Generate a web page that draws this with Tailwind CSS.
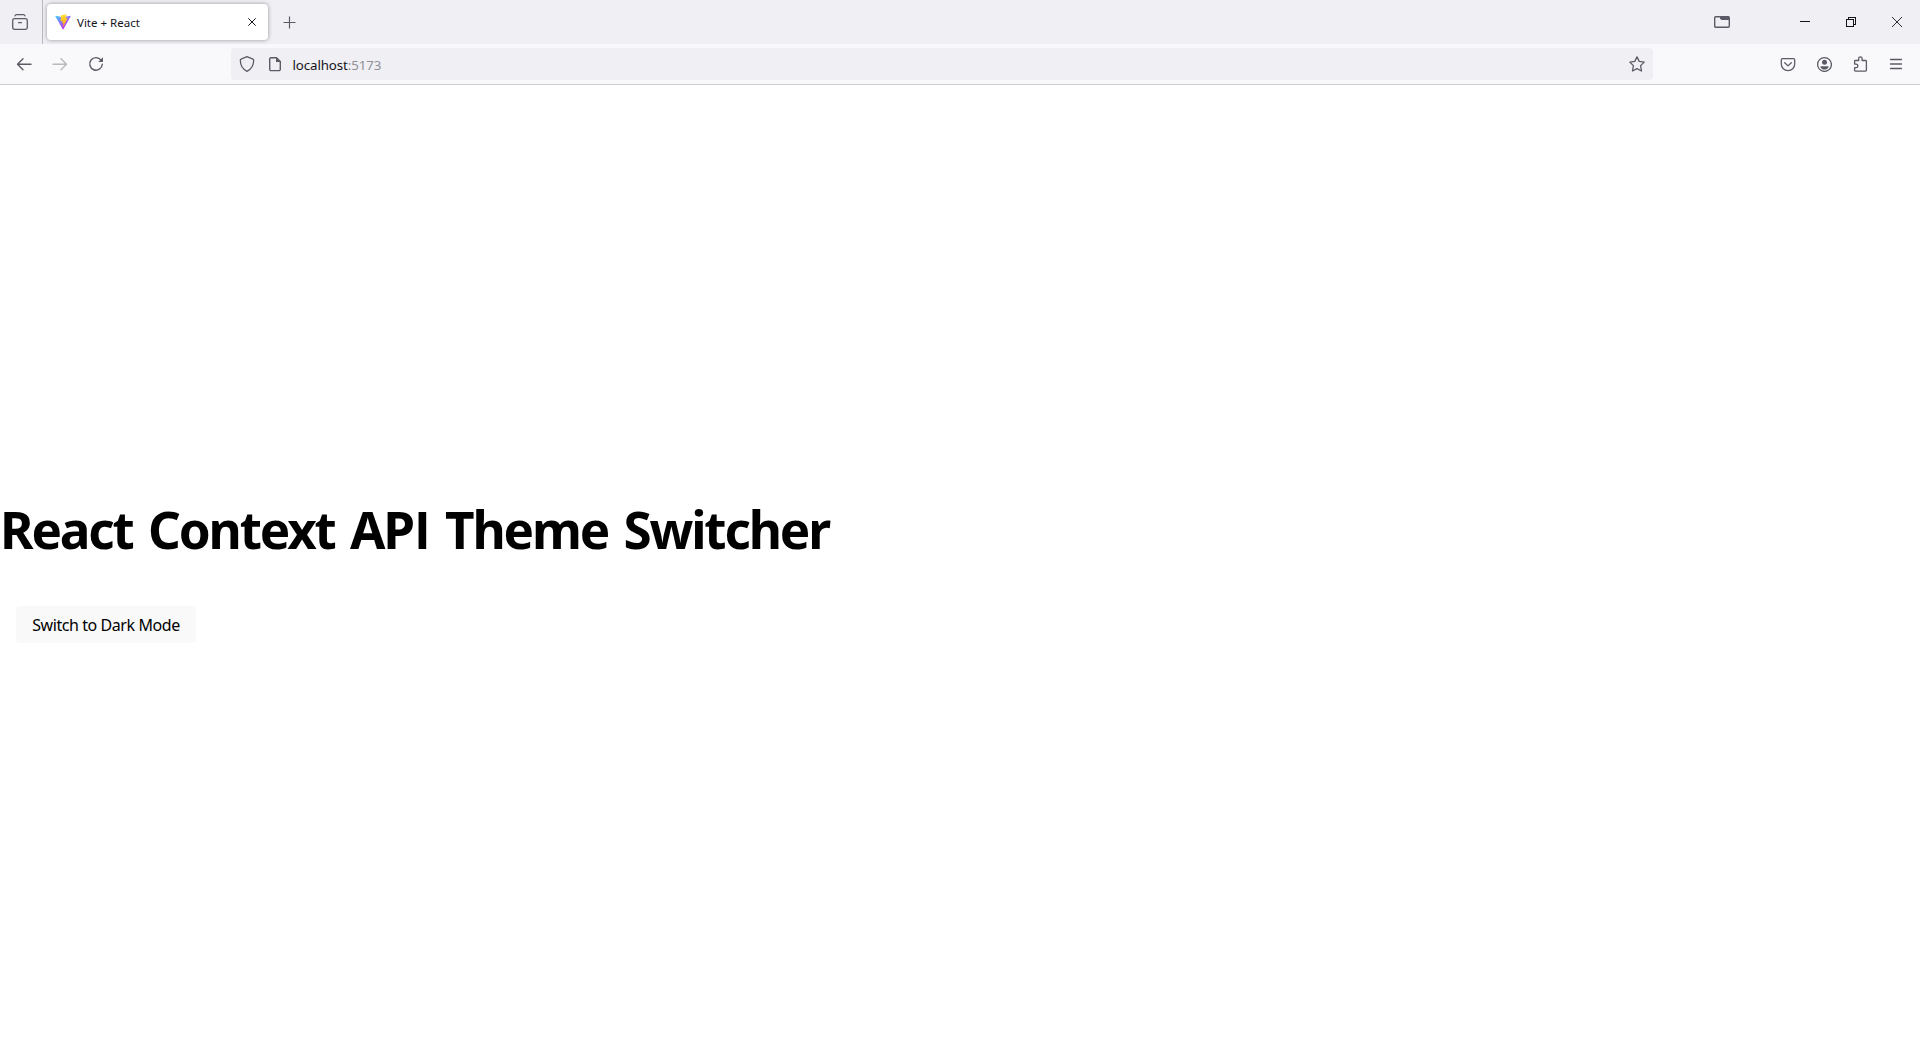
<!DOCTYPE html>
<html lang="en">
<head>
<meta charset="utf-8">
<title>Vite + React</title>
<script src="https://cdn.jsdelivr.net/npm/@tailwindcss/browser@4"></script>
</head>
<body class="flex h-screen flex-col overflow-hidden bg-white font-['Noto_Sans','Open_Sans',sans-serif] text-black">
<header class="shrink-0">
  <!-- Tab strip -->
  <div class="flex h-11 items-center bg-[#f0eff4] text-[#5b5b66]">
    <div class="flex h-11 w-[43px] items-center border-r border-[#b9b9c0] pl-3">
      <svg class="size-4" viewBox="0 0 16 16" fill="none" stroke="currentColor" stroke-width="1.3" stroke-linecap="round"><path d="M3 1.900C3.300 1 3.800.7 4.500.7h7c.7 0 1.200.3 1.500 1.200"/><rect x=".7" y="4.7" width="14.6" height="10.600" rx="1.800"/><path d="M6.600 8.700h2.800"/></svg>
    </div>
    <div class="ml-1 flex h-9 w-[221px] items-center rounded bg-white pl-2 pr-3 shadow-[0_0_4px_rgba(0,0,0,0.38)]">
      <svg class="size-4" viewBox="0 0 410 404" fill="none"><path d="m399.6 59.5-184 329c-3.8 6.8-13.600 6.800-17.400.100L10.600 59.500C6.400 52.200 12.700 43.300 21 44.800l184.200 32.900c1.200.2 2.400.2 3.500 0l180.400-32.900c8.300-1.500 14.700 7.300 10.500 14.700Z" fill="url(#v)"/><path d="m293 1.600-136.200 26.700c-2.200.4-3.900 2.300-4 4.600l-8.400 141.500c-.2 3.300 2.900 5.900 6.100 5.200l37.900-8.800c3.600-.8 6.800 2.300 6 5.900l-11.200 55.200c-.8 3.700 2.700 6.900 6.300 5.800l23.400-7.100c3.600-1.100 7.200 2.100 6.300 5.800l-17.900 86.600c-1.100 5.400 6.100 8.400 9.100 3.700l2-3.100L323.500 102c1.800-3.700-1.300-7.900-5.400-7.100l-39 7.500c-3.700.7-6.800-2.700-5.800-6.300l25.500-88.300c1.100-3.600-2.100-7-5.800-6.200Z" fill="url(#b)"/><defs><linearGradient id="v" x1="6" y1="33" x2="235" y2="344" gradientUnits="userSpaceOnUse"><stop stop-color="#41d1ff"/><stop offset="1" stop-color="#bd34fe"/></linearGradient><linearGradient id="b" x1="195" y1="9" x2="237" y2="293" gradientUnits="userSpaceOnUse"><stop stop-color="#ffea83"/><stop offset=".08" stop-color="#ffdd35"/><stop offset="1" stop-color="#ffa800"/></linearGradient></defs></svg>
      <span class="ml-1.5 mt-px grow whitespace-nowrap text-[11.5px] leading-4 text-[#15141a]">Vite + React</span>
      <svg class="size-2" viewBox="0 0 8 8" fill="none" stroke="#15141a" stroke-width="1"><path d="m.3.3 7.400 7.400M7.700.300.300 7.700"/></svg>
    </div>
    <svg class="ml-[15px] mt-px size-[13px]" viewBox="0 0 13 13" fill="none" stroke="currentColor" stroke-width="1.2"><path d="M6.500.500v12M.500 6.500h12"/></svg>
    <div class="ml-auto flex items-center pr-[18px] text-[#15141a]">
      <svg class="h-3 w-4 text-[#5b5b66]" viewBox="0 0 16 12" fill="none" stroke="currentColor" stroke-width="1.4"><rect x=".7" y=".7" width="14.600" height="10.600" rx="1"/><path d="M6 .5h9V4H7.500L6 2.500Z" fill="currentColor" stroke="none"/></svg>
      <svg class="ml-[70px] size-[10px]" viewBox="0 0 10 10" fill="none" stroke="currentColor" shape-rendering="crispEdges"><path d="M0 4.500h10"/></svg>
      <svg class="ml-9 size-[10px]" viewBox="0 0 10 10" fill="none" stroke="currentColor" shape-rendering="crispEdges"><path d="M2.500 2V.500h7v7H8"/><path d="M.500 2.500h7v7h-7Z"/></svg>
      <svg class="ml-9 size-[10px]" viewBox="0 0 10 10" fill="none" stroke="currentColor" stroke-width=".9"><path d="m0 0 10 10M10 0 0 10"/></svg>
    </div>
  </div>
  <!-- Navigation bar -->
  <nav class="flex h-[41px] items-center border-b border-[#cccccf] bg-[#f9f9fb] text-[#5b5b66]">
    <svg class="ml-4 size-4" viewBox="0 0 16 16" fill="none" stroke="currentColor" stroke-width="1.4" stroke-linecap="round" stroke-linejoin="round"><path d="M15 8.200H1.700M7 2.700 1.500 8.200 7 13.700"/></svg>
    <svg class="ml-5 size-4 opacity-40" viewBox="0 0 16 16" fill="none" stroke="currentColor" stroke-width="1.4" stroke-linecap="round" stroke-linejoin="round"><path d="M1 8.200h13.300M9 2.700l5.500 5.500L9 13.700"/></svg>
    <svg class="ml-5 size-4" viewBox="0 0 16 16" fill="none" stroke="currentColor" stroke-width="1.400" stroke-linecap="round"><path d="M13.200 4.300A6.300 6.300 0 1 0 14.300 8.300"/><path d="M15 1.300v4.200c0 .3-.2.500-.5.500h-4.200Z" fill="currentColor" stroke="none"/></svg>
    <div class="ml-[127px] flex h-8 w-[1422px] items-center rounded bg-[#f0eff4] pl-2 pr-2">
      <svg class="size-4" viewBox="0 0 16 16" fill="none" stroke="currentColor" stroke-width="1.300" stroke-linejoin="round"><path d="M8 .7 13.900 3.200c.5.200.800.600.800 1.100-.1 5.300-2.500 9-6.700 11-4.200-2-6.600-5.700-6.700-11 0-.5.300-.9.800-1.100Z"/></svg>
      <svg class="ml-3 size-4" viewBox="0 0 16 16" fill="none" stroke="currentColor" stroke-width="1.400" stroke-linejoin="round"><path d="M9.500 1.700H4A1.300 1.300 0 0 0 2.700 3v10.300A1.300 1.300 0 0 0 4 14.600h8a1.300 1.300 0 0 0 1.300-1.300V5.500Z"/><path d="M9 1.500V6h4.500Z" fill="currentColor" stroke="none"/></svg>
      <span class="ml-[9.500px] grow pt-px text-[13.3px] leading-5 tracking-[-0.1px] text-[#8f8f99]"><span class="text-[#15141a]">localhost</span>:5173</span>
      <svg class="size-4" viewBox="0 0 16 16" fill="none" stroke="currentColor" stroke-width="1.300" stroke-linejoin="round"><path d="M8 .9 10.200 5.400l5 .7-3.600 3.500.9 5.400L8 12.700 3.500 15l.9-5.400L.8 6.100l5-.7Z"/></svg>
    </div>
    <div class="ml-auto flex items-center gap-5 pr-4">
      <svg class="size-4" viewBox="0 0 16 16" fill="none" stroke="currentColor" stroke-width="1.300" stroke-linecap="round" stroke-linejoin="round"><path d="M2.700 2.600h10.600c.8 0 1.400.6 1.400 1.400v4a6.700 6.700 0 0 1-13.400 0V4c0-.8.600-1.400 1.400-1.400Z"/><path d="M4.700 6.800 8 9.900l3.300-3.100"/></svg>
      <svg class="size-4" viewBox="0 0 16 16" fill="none" stroke="currentColor" stroke-width="1.300"><circle cx="8.500" cy="8.500" r="6.900"/><circle cx="8.500" cy="6.300" r="2.500" fill="currentColor" stroke="none"/><path d="M4.300 10.200h8.400c-.4 2.200-2 3.400-4.200 3.400s-3.800-1.200-4.200-3.400Z" fill="currentColor" stroke="none"/></svg>
      <svg class="size-4" viewBox="0 0 16 16" fill="none" stroke="currentColor" stroke-width="1.300" stroke-linejoin="round"><path d="M2.600 7V5.300c0-.5.300-.8.800-.8h3.300V2.600a1.700 1.700 0 0 1 3.400 0v1.900h3.500c.5 0 .8.300.8.800v9c0 .5-.3.800-.8.800H3.400c-.5 0-.8-.3-.8-.8v-2.600h1.500a1.800 1.800 0 0 0 0-3.600H2.600Z"/></svg>
      <svg class="size-4" viewBox="0 0 16 16" fill="none" stroke="currentColor" stroke-width="1.300" stroke-linecap="round"><path d="M2.500 3.500h11M2.500 8h11M2.500 12.500h11"/></svg>
    </div>
  </nav>
</header>
<main class="flex grow flex-col items-start justify-center pt-[35px]">
  <h1 class="h-14 whitespace-nowrap text-[51.2px] font-bold leading-[56px] tracking-[-2.15px] [word-spacing:4.200px]">React Context AP<span class="ml-[2px] font-['Liberation_Sans'] text-[53px] leading-none tracking-normal">I</span> Theme Switcher</h1>
  <button class="m-4 mt-[49px] h-[37px] w-[180px] whitespace-nowrap rounded bg-[#f9f9f9] text-base leading-5 tracking-[-0.43px]">Switch to Dark Mode</button>
</main>
</body>
</html>
